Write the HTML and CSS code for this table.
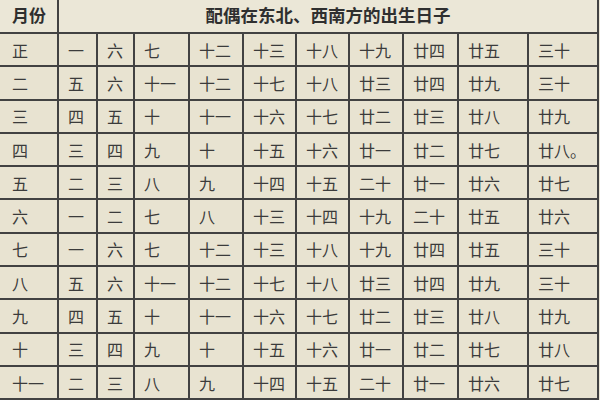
FILE: index.html
```html
<!DOCTYPE html>
<html lang="zh">
<head>
<meta charset="utf-8">
<link rel="stylesheet" href="styles.css">
</head>
<body>
<table class="grid">
  <colgroup>
    <col class="c-month">
    <col class="c1"><col class="c2"><col class="c3"><col class="c4"><col class="c5">
    <col class="c6"><col class="c7"><col class="c8"><col class="c9"><col class="c10">
  </colgroup>
  <thead>
    <tr class="head">
      <th class="month">月份</th>
      <th class="title" colspan="10">配偶在东北、西南方的出生日子</th>
    </tr>
  </thead>
  <tbody>
    <tr><td class="month">正</td><td>一</td><td>六</td><td>七</td><td>十二</td><td>十三</td><td>十八</td><td>十九</td><td>廿四</td><td>廿五</td><td>三十</td></tr>
    <tr><td class="month">二</td><td>五</td><td>六</td><td>十一</td><td>十二</td><td>十七</td><td>十八</td><td>廿三</td><td>廿四</td><td>廿九</td><td>三十</td></tr>
    <tr><td class="month">三</td><td>四</td><td>五</td><td>十</td><td>十一</td><td>十六</td><td>十七</td><td>廿二</td><td>廿三</td><td>廿八</td><td>廿九</td></tr>
    <tr><td class="month">四</td><td>三</td><td>四</td><td>九</td><td>十</td><td>十五</td><td>十六</td><td>廿一</td><td>廿二</td><td>廿七</td><td>廿八。</td></tr>
    <tr><td class="month">五</td><td>二</td><td>三</td><td>八</td><td>九</td><td>十四</td><td>十五</td><td>二十</td><td>廿一</td><td>廿六</td><td>廿七</td></tr>
    <tr><td class="month">六</td><td>一</td><td>二</td><td>七</td><td>八</td><td>十三</td><td>十四</td><td>十九</td><td>二十</td><td>廿五</td><td>廿六</td></tr>
    <tr><td class="month">七</td><td>一</td><td>六</td><td>七</td><td>十二</td><td>十三</td><td>十八</td><td>十九</td><td>廿四</td><td>廿五</td><td>三十</td></tr>
    <tr><td class="month">八</td><td>五</td><td>六</td><td>十一</td><td>十二</td><td>十七</td><td>十八</td><td>廿三</td><td>廿四</td><td>廿九</td><td>三十</td></tr>
    <tr><td class="month">九</td><td>四</td><td>五</td><td>十</td><td>十一</td><td>十六</td><td>十七</td><td>廿二</td><td>廿三</td><td>廿八</td><td>廿九</td></tr>
    <tr><td class="month">十</td><td>三</td><td>四</td><td>九</td><td>十</td><td>十五</td><td>十六</td><td>廿一</td><td>廿二</td><td>廿七</td><td>廿八</td></tr>
    <tr><td class="month">十一</td><td>二</td><td>三</td><td>八</td><td>九</td><td>十四</td><td>十五</td><td>二十</td><td>廿一</td><td>廿六</td><td>廿七</td></tr>
  </tbody>
</table>
</body>
</html>
```
FILE: styles.css
```css
html, body {
  margin: 0;
  padding: 0;
  background: #ebe7d8;
}

body {
  width: 600px;
  height: 400px;
  overflow: hidden;
  font-family: "Noto Sans CJK SC", "Noto Sans", sans-serif;
  color: #3b3b3b;
}

.grid {
  border-collapse: collapse;
  table-layout: fixed;
  width: 598px;
  background: #e8e3d1;
}

.c-month { width: 58px; }
.c1 { width: 39px; }
.c2 { width: 37px; }
.c3 { width: 55px; }
.c4 { width: 54px; }
.c5 { width: 53px; }
.c6 { width: 53px; }
.c7 { width: 54px; }
.c8 { width: 55px; }
.c9 { width: 70px; }
.c10 { width: 70px; }

.grid th,
.grid td {
  border: 2px solid #424242;
  padding: 0 0 0 9px;
  text-align: left;
  font-size: 16px;
  line-height: 20px;
  white-space: nowrap;
  overflow: hidden;
}

.grid tr > :first-child {
  border-left: none;
  padding-left: 12px;
}

.grid thead th {
  border-top: none;
  background: #ebe7d7;
  height: 29px;
  font-weight: bold;
  font-size: 17px;
  color: #2f2f2f;
  padding-bottom: 3px;
}

.grid .title {
  text-align: center;
  font-size: 17.5px;
  padding-left: 0;
}

.grid tbody td {
  height: 31.3px;
  padding-top: 0;
  padding-bottom: 0;
}
```
